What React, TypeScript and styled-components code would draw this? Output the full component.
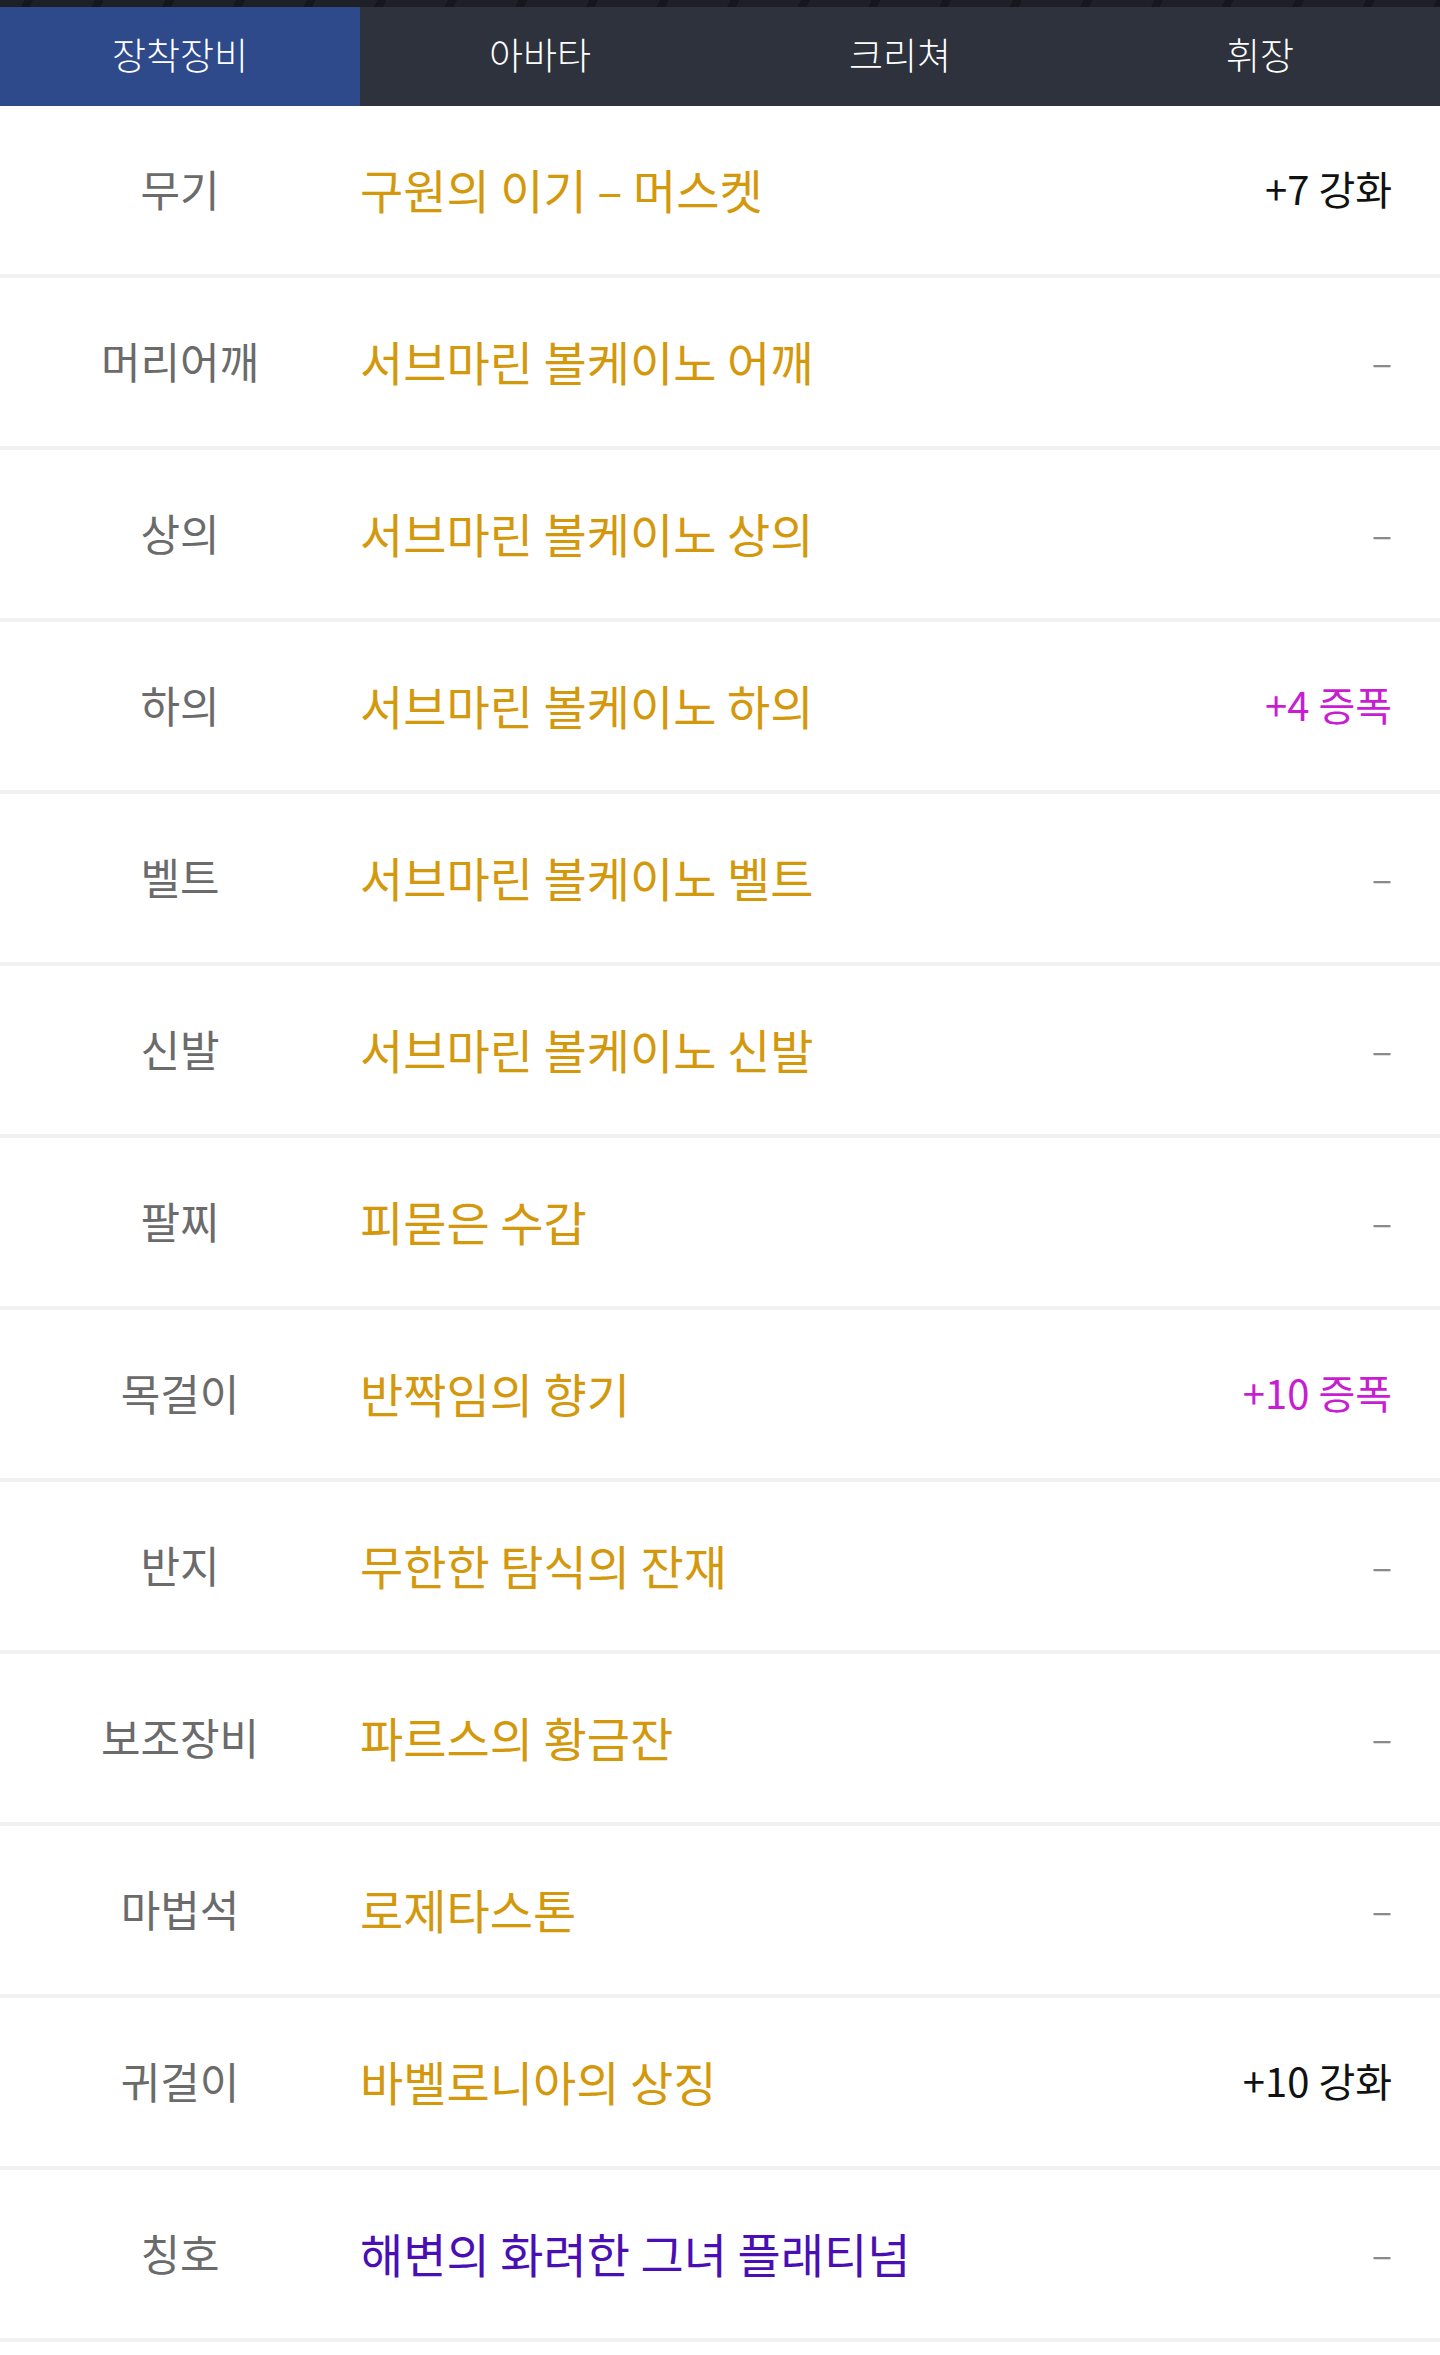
import React from "react";
import styled, { createGlobalStyle } from "styled-components";

const Global = createGlobalStyle`
  html, body { margin: 0; padding: 0; background: #ffffff; }
  body { font-family: "Noto Sans CJK KR", "Noto Sans", sans-serif; }
`;

const Page = styled.div`
  width: 1440px;
  min-height: 2355px;
  background: #ffffff;
`;

const TopStrip = styled.div`
  height: 7px;
  background:
    repeating-linear-gradient(115deg, #1d2127 0 22px, #14171c 22px 30px, #1d2127 30px 64px),
    #1d2127;
`;

const TabBar = styled.nav`
  display: grid;
  grid-template-columns: repeat(4, 1fr);
  height: 99px;
  background: #2d323c;
`;

const Tab = styled.div<{ $active?: boolean }>`
  display: flex;
  align-items: center;
  justify-content: center;
  background: ${(p) => (p.$active ? "#2e4a8b" : "transparent")};
  color: #ffffff;
  font-size: 37px;
  font-weight: 300;
  padding-bottom: 6px;
`;

const List = styled.div`
  display: flex;
  flex-direction: column;
`;

const Row = styled.div`
  display: grid;
  grid-template-columns: 360px 1fr auto;
  align-items: center;
  box-sizing: border-box;
  height: 172px;
  border-bottom: 4px solid #f1f1f1;
  padding-right: 48px;
  padding-bottom: 4px;
`;

const Label = styled.div`
  text-align: center;
  color: #6b6b6b;
  font-size: 43px;
  font-weight: 400;
`;

const ItemName = styled.div<{ $tone: "gold" | "purple" }>`
  color: ${(p) => (p.$tone === "purple" ? "#4a0fb4" : "#d4980c")};
  font-size: 47px;
  font-weight: 400;
  white-space: nowrap;
`;

const Value = styled.div<{ $kind: "upgrade" | "amp" | "none" }>`
  text-align: right;
  font-size: ${(p) => (p.$kind === "none" ? "38px" : "40px")};
  color: ${(p) =>
    p.$kind === "amp" ? "#c81ed2" : p.$kind === "none" ? "#8a8a8a" : "#111111"};
  white-space: nowrap;
`;

type Item = {
  slot: string;
  name: string;
  tone: "gold" | "purple";
  value: string;
  kind: "upgrade" | "amp" | "none";
};

const items: Item[] = [
  { slot: "무기", name: "구원의 이기 – 머스켓", tone: "gold", value: "+7 강화", kind: "upgrade" },
  { slot: "머리어깨", name: "서브마린 볼케이노 어깨", tone: "gold", value: "–", kind: "none" },
  { slot: "상의", name: "서브마린 볼케이노 상의", tone: "gold", value: "–", kind: "none" },
  { slot: "하의", name: "서브마린 볼케이노 하의", tone: "gold", value: "+4 증폭", kind: "amp" },
  { slot: "벨트", name: "서브마린 볼케이노 벨트", tone: "gold", value: "–", kind: "none" },
  { slot: "신발", name: "서브마린 볼케이노 신발", tone: "gold", value: "–", kind: "none" },
  { slot: "팔찌", name: "피묻은 수갑", tone: "gold", value: "–", kind: "none" },
  { slot: "목걸이", name: "반짝임의 향기", tone: "gold", value: "+10 증폭", kind: "amp" },
  { slot: "반지", name: "무한한 탐식의 잔재", tone: "gold", value: "–", kind: "none" },
  { slot: "보조장비", name: "파르스의 황금잔", tone: "gold", value: "–", kind: "none" },
  { slot: "마법석", name: "로제타스톤", tone: "gold", value: "–", kind: "none" },
  { slot: "귀걸이", name: "바벨로니아의 상징", tone: "gold", value: "+10 강화", kind: "upgrade" },
  { slot: "칭호", name: "해변의 화려한 그녀 플래티넘", tone: "purple", value: "–", kind: "none" },
];

const tabs = ["장착장비", "아바타", "크리쳐", "휘장"];

export default function App() {
  return (
    <Page>
      <Global />
      <TopStrip />
      <TabBar>
        {tabs.map((t, i) => (
          <Tab key={t} $active={i === 0}>
            {t}
          </Tab>
        ))}
      </TabBar>
      <List>
        {items.map((it) => (
          <Row key={it.slot}>
            <Label>{it.slot}</Label>
            <ItemName $tone={it.tone}>{it.name}</ItemName>
            <Value $kind={it.kind}>{it.value}</Value>
          </Row>
        ))}
      </List>
    </Page>
  );
}
